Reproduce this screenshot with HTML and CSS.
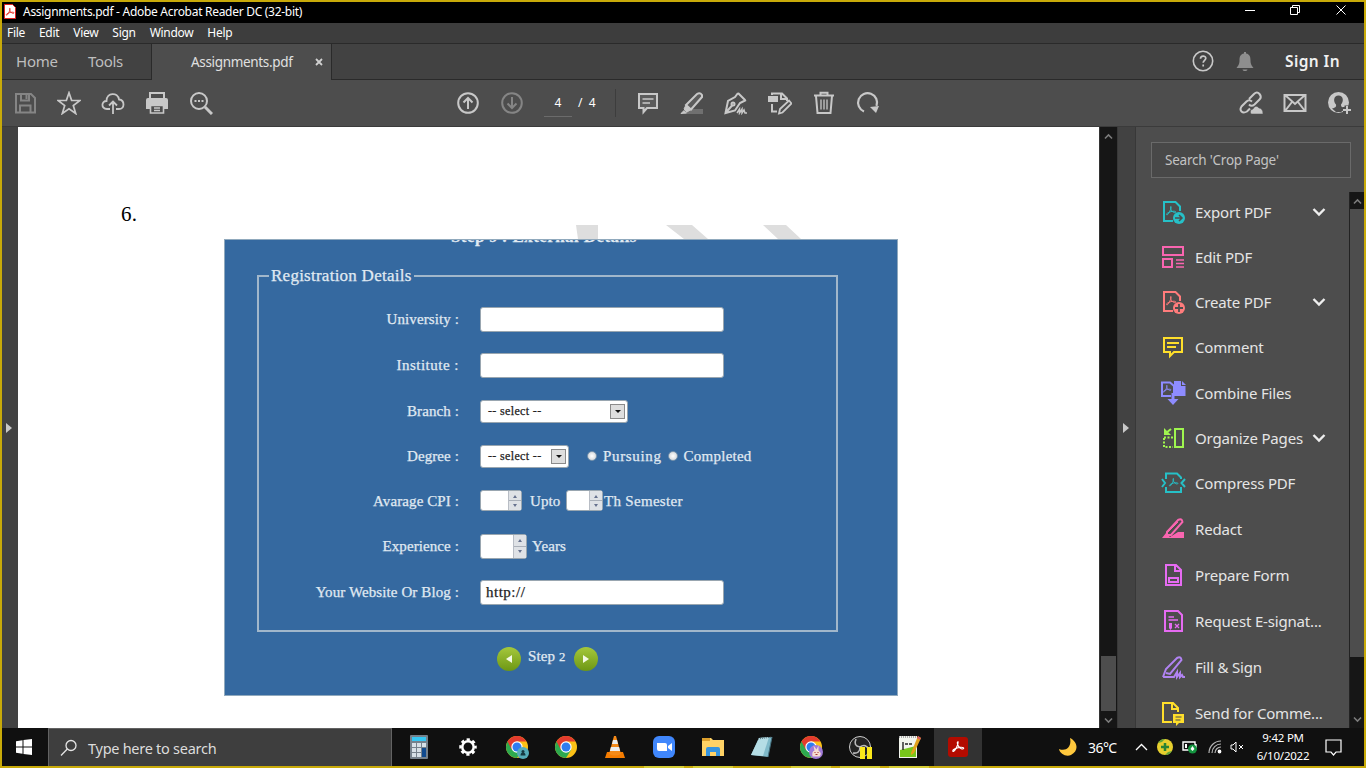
FILE: index.html
```html
<!DOCTYPE html>
<html lang="en">
<head>
<meta charset="utf-8">
<title>Assignments.pdf - Adobe Acrobat Reader DC (32-bit)</title>
<link rel="stylesheet" href="styles.css">
</head>
<body>
<svg class="defs" width="0" height="0">
  <symbol id="acro" viewBox="0 0 24 24"><path d="M12 3c-2 0-1 5 1 8s6 5 8 4 0-3-5-2.500-13 3.500-13 6 3 1 5-3 5-9 4-12z" fill="none" stroke="currentColor" stroke-width="2"/></symbol>
  <symbol id="chev" viewBox="0 0 14 10"><path d="M1.500 2 7 7.500 12.500 2" fill="none" stroke="currentColor" stroke-width="2.400"/></symbol>
  <symbol id="chrome" viewBox="0 0 24 24"><circle cx="12" cy="12" r="11" fill="#fbc116"/><path d="M12 12 2.500 6.500A11 11 0 0 0 12 23l5-8z" fill="#2da94f"/><path d="M2.500 6.500A11 11 0 0 1 21.500 6.500H12L7 15z" fill="#e33b2e"/><circle cx="12" cy="12" r="5.700" fill="#fff"/><circle cx="12" cy="12" r="4.500" fill="#2f7cf0"/></symbol>
</svg>
<div class="titlebar">
  <svg class="app-icon" viewBox="0 0 12 15"><path d="M.5.500H8.500L11.500 3.500V14.500H.5z" fill="#fff" stroke="#d22"/><use href="#acro" x="1" y="3" width="10" height="10" color="#e3241b"/></svg>
  <span class="title">Assignments.pdf - Adobe Acrobat Reader DC (32-bit)</span>
  <svg class="winctl" viewBox="0 0 104 12" width="104" height="12" fill="none" stroke="#fff"><path d="M0 6.500h10M45.500 3.500h7v7h-7zM47.500 3.500v-2h7v7h-2M91.500 1.500l9 9M100.500 1.500l-9 9"/></svg>
</div>
<div class="menubar"><span>File</span><span>Edit</span><span>View</span><span>Sign</span><span>Window</span><span>Help</span></div>
<div class="tabbar">
  <span class="home">Home</span><span class="tools">Tools</span>
  <div class="tab"><span>Assignments.pdf</span><svg width="8" height="8" viewBox="0 0 8 8"><path d="M1 1l6 6M7 1 1 7" stroke="#d0d0d0" stroke-width="1.800"/></svg></div>
  <div class="account">
    <svg width="24" height="24" viewBox="0 0 24 24"><circle cx="12" cy="12" r="9.700" fill="none" stroke="#c8c8c8" stroke-width="1.600"/><path d="M9.500 9.700c0-3.400 5.300-3.400 5.300-.4 0 2-2.600 2-2.600 4.400M12.200 15.500v2" fill="none" stroke="#c8c8c8" stroke-width="1.700"/></svg>
    <svg width="20" height="24" viewBox="0 0 20 24" fill="#8e8e8e"><path d="M9 3h2v1.500c4 .5 4.500 4 4.500 7 0 4 1.500 5.500 3 7.500h-17c1.500-2 3-3.500 3-7.500 0-3 .5-6.500 4.500-7zM7.500 20.500h5c-.5 2-4.500 2-5 0z"/></svg>
    <b>Sign In</b>
  </div>
</div>
<div class="toolbar">
  <div class="group">
    <svg viewBox="0 0 24 24" stroke="#858585"><path d="M3 3H18L22 7V21.500H3zM8 3V9.500H16V3M13.500 4V8M7 21V14.500H17.500V21"/></svg>
    <svg viewBox="0 0 24 24"><path d="M12 1.800 14.600 9.300 23 9.500 16.300 14.500 18.700 22.500 12 17.700 5.300 22.500 7.700 14.500 1 9.500 9.400 9.300z" stroke-width="1.700"/></svg>
    <svg viewBox="0 0 24 24"><path d="M9 18H6C-.5 17.500.5 10 5.500 10 5.500 1 17 1 18 8.500c6 .5 6 9.500 0 9.500H15M12 23V10.500M8 14.500l4-4 4 4" stroke-width="1.800"/></svg>
    <svg viewBox="0 0 24 24"><path d="M5 8V2H19V8" stroke-width="2"/><path d="M3 7H21Q23 7 23 9V18H19V15H5V18H1V9Q1 7 3 7z" fill="#c8c8c8" stroke="none"/><path d="M5.500 14.500H18.500V22H5.500zM9 17H15M9 19.500H15" stroke-width="1.600"/></svg>
    <svg viewBox="0 0 24 24"><circle cx="10" cy="10" r="8"/><path d="M16 16l7 7" stroke-width="3"/><path d="M5.500 10h2m1.500 0h2m1.500 0h2" stroke-width="2"/></svg>
  </div>
  <div class="group pages">
    <svg viewBox="0 0 24 24"><circle cx="12" cy="12" r="9.800"/><path d="M12 18V7M7.500 11.500 12 7l4.500 4.500"/></svg>
    <svg viewBox="0 0 24 24" stroke="#858585"><circle cx="12" cy="12" r="9.800"/><path d="M12 6v11M7.500 12.500 12 17l4.500-4.500"/></svg>
    <span class="pageno">4</span>
  </div>
  <span class="total">/&nbsp; 4</span>
  <div class="group edit">
    <svg viewBox="0 0 24 24"><path d="M3 3H21V17H11L7.500 21V17H3z" fill="#5c5c5c"/><path d="M6.500 8h11M6.500 12H14" stroke-width="1.500"/></svg>
    <svg viewBox="0 0 24 24"><path d="M7 18H23V23H4z" fill="#707070" stroke="none"/><path d="M6 14 17 3q3-2 5 1v2L11 18.500z" fill="#5c5c5c"/><path d="M6 14l5 4.500L7 21 4 18zM1 22.500l3-3 2.500 2.500z" fill="#c8c8c8" stroke-width="1"/></svg>
    <svg viewBox="0 0 24 24"><path d="M14 2 11 6 4 10 1.500 22 11 19.500 16 12 22 9M14 2l7 7M1.500 22l7-8" stroke-width="2"/><circle cx="9" cy="13" r="1.500"/><path d="M13 22l2.500-4v4l2.500-4v4l2-3 1 3h2" stroke-width="1.500"/></svg>
    <svg viewBox="0 0 24 24"><path d="M4 4V2.500H14L19 7.500V10M13 3v5h6M4 13v7.500H9" stroke-width="2"/><path d="M0 5H10V11H0z" fill="#c8c8c8" stroke="none"/><path d="M11 22.500 12 18l9-8.500 2.500 3-9 9z" stroke-width="1.800"/></svg>
    <svg viewBox="0 0 24 24"><path d="M2 4.500H22M8.500 4V1.800h7V4M4 5l1.500 17h13L20 5" stroke-width="2"/><path d="M9 8.500v10M12 8.500v10M15 8.500v10" stroke-width="1.300"/></svg>
    <svg viewBox="0 0 24 24"><path d="M8 20.500A9.500 9.500 0 1 1 20.500 15" stroke-width="2.200"/><path d="M14 16l9-1-3 7z" fill="#c8c8c8" stroke="none"/></svg>
  </div>
  <div class="group share">
    <svg viewBox="0 0 24 24" stroke-width="1.800"><path d="m10 8 5-5q3-3 5.500 0t0 5.500l-5 5q-3 2.500-5.500 0M13 10.500q-3-2.500-5.500 0l-5 5q-2 3 0 5t5.500 0l3-3"/><path d="M12 23q-2-4 2-5 2.500-5 6-1 4 .5 4 6z" fill="#c8c8c8" stroke="#4d4d4d" stroke-width=".5"/></svg>
    <svg viewBox="0 0 24 24" stroke-width="1.700"><path d="M1.500 4H22.500V20H1.500zM2 4l10 9L22 4M2 20l7-9M22 20l-7-9"/></svg>
    <svg viewBox="0 0 24 24"><circle cx="11.500" cy="11.500" r="10.500" fill="#c8c8c8" stroke="none"/><path d="M11.500 4.500c5 0 5.500 6 2.500 9 0 3 1.500 2.500 5 4L14 21H9l-4-3.500c3-1 4.500-1 4-4-3-3-2.500-9 2.500-9z" fill="#4d4d4d" stroke="none"/><path d="M20 14.500v8M16 18.500h8" stroke="#4d4d4d" stroke-width="5"/><path d="M20 15v8M16 19h8" stroke-width="2"/></svg>
  </div>
</div>
<div class="main">
  <div class="handle"><i class="tri"></i></div>
  <div class="document">
    <p class="question">6.</p>
    <svg class="watermark" width="673" height="14" viewBox="0 0 673 14" fill="#dedede"><path d="M352 0h22v14h-20zM442 0h26l16 14h-24zM539 0h23l15 14h-23z"/></svg>
    <div class="form">
      <div class="step-title">Step <small>3</small> : External Details</div>
      <fieldset>
        <legend>Registration Details</legend>
        <div class="row"><label>University :</label><span class="box wide"></span></div>
        <div class="row"><label class="loose">Institute :</label><span class="box wide"></span></div>
        <div class="row"><label>Branch :</label><span class="box select branch">-- select --<i class="drop"></i></span></div>
        <div class="row r44"><label>Degree :</label><span class="box select degree">-- select --<i class="drop"></i></span><i class="radio first"></i><span class="opt loose">Pursuing</span><i class="radio"></i><span class="opt">Completed</span></div>
        <div class="row r44"><label>Avarage CPI :</label><span class="box spin s1"><i></i></span><span class="upto">Upto</span><span class="box spin s2"><i></i></span><span class="sem">Th Semester</span></div>
        <div class="row"><label>Experience :</label><span class="box spin s3"><i></i></span><span class="years">Years</span></div>
        <div class="row"><label>Your Website Or Blog :</label><span class="box wide">http://</span></div>
      </fieldset>
      <div class="steps"><span class="round"><svg width="8" height="10"><path d="M7 1v8L1 5z" fill="#f4f9e4"/></svg></span><span class="stepno">Step <small>2</small></span><span class="round"><svg width="8" height="10"><path d="M1 1v8l6-4z" fill="#f4f9e4"/></svg></span></div>
    </div>
  </div>
  <div class="scroll doc-scroll"><svg class="up" viewBox="0 0 14 10"><use href="#chev" /></svg><div class="thumb"></div><svg viewBox="0 0 14 10"><use href="#chev"/></svg></div>
  <div class="handle right"><i class="tri"></i></div>
  <div class="panel">
    <div class="search">Search 'Crop Page'</div>
    <div class="panel-body">
      <div class="list">
        <div class="item teal"><svg viewBox="0 0 24 24"><path d="M12 21H3V2H14.500L19 6.500V11"/><use href="#acro" x="4" y="5" width="12" height="12"/><circle cx="18" cy="18" r="6" fill="currentColor" stroke="none"/><path d="M14 18h7M18 15l3 3-3 3" stroke="#4d4d4d" stroke-width="1.500"/></svg><span>Export PDF</span><svg class="chev"><use href="#chev"/></svg></div>
        <div class="item pink"><svg viewBox="0 0 24 24"><path d="M2 2H22V10H2zM2 14H11V22H2z"/><path d="M15 15h8M15 18.500h8M15 22h8" stroke-width="1.300"/></svg><span>Edit PDF</span></div>
        <div class="item coral"><svg viewBox="0 0 24 24"><path d="M12 21H3V2H14.500L19 6.500V11"/><use href="#acro" x="4" y="5" width="12" height="12"/><circle cx="18" cy="18" r="6" fill="currentColor" stroke="none"/><path d="M14 18h8M18 14v8" stroke="#4d4d4d" stroke-width="1.800"/></svg><span>Create PDF</span><svg class="chev"><use href="#chev"/></svg></div>
        <div class="item yellow"><svg viewBox="0 0 24 24"><path d="M3 3H21V17H13L9 21V17H3zM6 8H18M6 12H15"/></svg><span>Comment</span></div>
        <div class="item indigo gap"><svg viewBox="0 0 24 24"><path d="M10 15H1V1.500H9L13 5V12"/><use href="#acro" x="1" y="3" width="10" height="10"/><path d="M13 0H20V5H24.500V15H13z" fill="currentColor" stroke="none"/><path d="M21 0l4 4h-4z" fill="currentColor" stroke="none"/><path d="M12 12v8" stroke-width="3"/><path d="M6.500 18H17.500L12 24z" fill="currentColor" stroke="none"/></svg><span>Combine Files</span></div>
        <div class="item lime"><svg viewBox="0 0 24 24"><path d="M14 3H22V21H14z"/><path d="M3 11.500H12M3 12V21H12" stroke-dasharray="2 1.500"/><path d="M3 2l7 7H3z" fill="currentColor" stroke="none"/><path d="M5 7 10 3"/></svg><span>Organize Pages</span><svg class="chev"><use href="#chev"/></svg></div>
        <div class="item teal"><svg viewBox="0 0 24 24"><path d="M5 8V2.500H16L20 6.500V8M5 16v5H20V16M1 8l3 4-3 4M24 8l-3.500 4L24 16"/><use href="#acro" x="7" y="6" width="11" height="11"/></svg><span>Compress PDF</span></div>
        <div class="item pink gap"><svg viewBox="0 0 24 24"><path d="M6 15 17 3q4-2 4.500 2L10 18H6z"/><path d="M7 15 17 5" stroke-width="1"/><path d="M1 21l4-5 4 4 8-5h6v6z" fill="currentColor" stroke="none"/></svg><span>Redact</span></div>
        <div class="item magenta gap"><svg viewBox="0 0 24 24"><path d="M5 2H15L20 7V22H5zM14 3V8H20M8 15h9v4H8z"/></svg><span>Prepare Form</span></div>
        <div class="item magenta gap"><svg viewBox="0 0 24 24"><path d="M4 2H17L21 6V22H4z"/><path d="M7.500 8H13M7.500 11H17M14 15l4 4M18 15l-4 4" stroke-width="1.300"/><path d="M8 14h3v5l-1.500 2L8 19z" fill="currentColor" stroke="none"/></svg><span>Request E-signat...</span></div>
        <div class="item violet gap"><svg viewBox="0 0 24 24"><path d="M2 22 5 14 16 3q4-2 4.500 2L9 19l-4-1M2 22h11l3-5v5l3-4v4l2-2 1 2h2"/></svg><span>Fill &amp; Sign</span></div>
        <div class="item yellow gap"><svg viewBox="0 0 24 24"><path d="M11 21H2V2H12L17 7V11M11 2V8H17"/><path d="M12 13H23V22H18L15 25V22H12z" fill="currentColor" stroke="none"/><path d="M14.500 16h6M14.500 19h5" stroke="#4d4d4d" stroke-width="1.200"/></svg><span>Send for Comme...</span></div>
      </div>
      <div class="scroll panel-scroll"><svg class="up" viewBox="0 0 14 10"><use href="#chev"/></svg><div class="thumb"></div><svg viewBox="0 0 14 10"><use href="#chev"/></svg></div>
    </div>
  </div>
</div>
<div class="taskbar">
  <div class="start"><svg width="16" height="16" fill="#fff"><path d="M0 2.200 6.500 1.200V7.500H0zM7.500 1 16 0V7.500H7.500zM0 8.500H6.500V14.800L0 13.800zM7.500 8.500H16V16L7.500 15z"/></svg></div>
  <div class="tsearch"><svg width="18" height="18" viewBox="0 0 18 18" fill="none" stroke="#e4e4e4" stroke-width="1.300"><circle cx="11" cy="6.500" r="5"/><path d="M7.300 10 1 16.500"/></svg><span>Type here to search</span></div>
  <div class="apps">
    <div><svg viewBox="0 0 24 24"><rect x="3" width="18" height="24" rx="1" fill="#75818c"/><path d="M5 2H19V6H5z" fill="#35c7f4"/><path d="M5 8h4v4H5zM10 8h4v4h-4zM15 8h4v4h-4zM5 13h4v4H5zM10 13h4v4h-4zM5 18h4v4H5zM10 18h4v4h-4z" fill="#d6e0e7"/><path d="M15 13h4v9h-4z" fill="#104a8e"/></svg></div>
    <div><svg viewBox="0 0 24 24" fill="none" stroke="#fff"><circle cx="12" cy="12" r="7.500" stroke-width="2.500" stroke-dasharray="3.200 2.690" stroke-dashoffset="1.600"/><circle cx="12" cy="12" r="5.700" stroke-width="2.500"/></svg></div>
    <div><svg viewBox="0 0 24 24"><use href="#chrome"/><circle cx="18" cy="18" r="6" fill="#55acb9"/><circle cx="18" cy="16.500" r="1.500" fill="#163941"/><path d="M15.500 20.500q0-3 2.500-3t2.500 3z" fill="#163941"/></svg></div>
    <div><svg viewBox="0 0 24 24"><use href="#chrome"/></svg></div>
    <div><svg viewBox="0 0 24 24"><path d="M4 17H20L22 23H2z" fill="#f57c00"/><path d="M11 1h2l5 18q-6 3-12 0z" fill="#f58a18"/><path d="M10 5h4l1 4H9zM7.900 12h8.200l1 4H6.900z" fill="#eee"/></svg></div>
    <div><svg viewBox="0 0 24 24"><rect x="1" y="1" width="22" height="22" rx="6" fill="#4087fc"/><path d="M5 8h8q2 0 2 2v6H7q-2 0-2-2zM16 11l4-3v8l-4-3z" fill="#fff"/></svg></div>
    <div><svg viewBox="0 0 24 24"><path d="M1 3h9l2 2h11v16H1z" fill="#ffd265"/><path d="M1 3h8v3H1z" fill="#dda02d"/><path d="M5 21v-7q0-2 2-2h10q2 0 2 2v7h-4v-4H9v4z" fill="#3694de"/></svg></div>
    <div><svg viewBox="0 0 24 24"><path d="M9 3 22 2 18 22 1 20z" fill="#80bac9"/><path d="M9 3 19 2 13 21 1 20z" fill="#b5dde5"/><path d="M8 4 22 2" stroke="#546b75" stroke-dasharray="1 1"/><path d="M22 2 18 22" stroke="#447080"/></svg></div>
    <div><svg viewBox="0 0 24 24"><use href="#chrome"/><circle cx="17" cy="17" r="7" fill="#a17bd9"/><path d="M13.500 21.500q-1-5 2-6l-1-5 3 4 2-4v5q4 3 1 6z" fill="#f6ddd0"/><path d="M15.500 17.500h1m2 0h1m-3 2h2" stroke="#a33"/></svg></div>
    <div><svg viewBox="0 0 24 24"><circle cx="12" cy="12" r="10.500" fill="#242424" stroke="#ccc"/><path d="M12 12Q5 11 8 4M12 12q6-4 9 3M12 12q0 7-7 6" fill="none" stroke="#bbb" stroke-width="1.600"/><path d="M12 12h5v12h-5zM19 12h5v12h-5z" fill="#fce81a"/></svg></div>
    <div><svg viewBox="0 0 24 24"><path d="M2 1H20V23H2z" fill="#f1f4ed"/><path d="M3 15 19 11V22H3z" fill="#78c71b"/><path d="M2 2H20" stroke="#aaa" stroke-width="2" stroke-dasharray="1 1"/><path d="M6 7v8M8 9h3m1 0h3" stroke="#222" stroke-width="1.400"/><path d="M14 18 21 1l3 2-7 15-3 2z" fill="#e3a11a"/><path d="M21 1l3 2-1 2-3-2z" fill="#d85d60"/></svg></div>
    <div class="active"><svg viewBox="0 0 24 24"><rect x="2" y="2" width="20" height="20" rx="3" fill="#b30b00"/><use href="#acro" x="5" y="5" width="14" height="14" color="#fff"/></svg></div>
  </div>
  <div class="tray">
    <svg class="moon" width="20" height="20"><path d="M12 1c8 4 9 13 1 17C8 20 2 17 1 12c7 3 13-2 11-11z" fill="#ffc83d"/></svg>
    <span class="temp">36°C</span>
    <svg class="caret" width="13" height="8"><path d="M1 7l5.500-5.500L12 7" fill="none" stroke="#fff" stroke-width="1.300"/></svg>
    <svg class="plus" width="16" height="16"><circle cx="8" cy="8" r="8" fill="#e7cf2e"/><path d="M1 4A8 8 0 0 1 8 0L5 3M15 12a8 8 0 0 1-7 4l3-3" fill="#62a63a"/><path d="M8 4v8M4 8h8" stroke="#298334" stroke-width="2.500"/></svg>
    <svg class="battery" width="16" height="14"><path d="M1 2h12v8H1zM14 4v4" fill="none" stroke="#fff" stroke-width="1.400"/><path d="M3 4h2v4H3z" fill="#fff"/><circle cx="10.500" cy="9" r="4.500" fill="#13943f"/><path d="M10.500 6l2 3-2 2-2-2z" fill="#fff"/></svg>
    <svg class="wifi" width="14" height="14" fill="none" stroke="#b5b5b5" stroke-width="1.200"><path d="M1 13A12 12 0 0 1 13 1M4 13A9 9 0 0 1 13 4M7 13a6 6 0 0 1 6-6"/><circle cx="11.500" cy="11.500" r="1.300" fill="#fff" stroke="#fff"/></svg>
    <svg class="sound" width="15" height="12" fill="none" stroke="#fff"><path d="M1 4h2l3-3v10L3 8H1zM9 4l4 4M13 4 9 8"/></svg>
    <div class="clock"><span>9:42 PM</span><span>6/10/2022</span></div>
    <svg class="note" width="17" height="17" fill="none" stroke="#fff" stroke-width="1.200"><path d="M1 1H16V13H11L8.500 16 6 13H1z"/></svg>
  </div>
</div>
</body>
</html>
```
FILE: styles.css
```css
* { box-sizing: border-box; }
body { margin: 0; width: 1366px; height: 768px; padding: 2px; overflow: hidden; display: flex; flex-direction: column; font-family: "Noto Sans", sans-serif; font-size: 12px; color: #fff;
  background: linear-gradient(90deg, transparent 644px, #d6cd36 644px 684px, transparent 684px 693px, #d6cd36 693px 733px, transparent 733px 791px, #d6cd36 791px 831px, transparent 831px 840px, #d6cd36 840px 880px, transparent 880px 889px, #d6cd36 889px 929px, transparent 929px) bottom / 100% 2px no-repeat, #c8aa09; }
svg { flex: none; display: block; }
.defs { position: absolute; }
.titlebar { height: 21px; flex: none; background: #000; display: flex; align-items: center; padding-left: 2px; }
.app-icon { width: 12px; height: 15px; margin-top: -2px; }
.title { margin-left: 7px; padding-bottom: 2px; letter-spacing: -.29px; white-space: nowrap; }
.winctl { margin-left: auto; margin-right: 15px; margin-top: -5px; }
.menubar { height: 21px; flex: none; background: #3d3d3d; border-bottom: 1px solid #2a2a2a; display: flex; align-items: center; padding: 0 0 2px 5px; gap: 14px; letter-spacing: -.3px; }
.tabbar { height: 36px; flex: none; background: #424242; border-bottom: 1px solid #2a2a2a; display: flex; align-items: center; font-size: 15px; color: #bebebe; }
.home { margin-left: 14px; width: 72px; padding-bottom: 2px; letter-spacing: -.2px; }
.tools { width: 63px; padding-bottom: 2px; letter-spacing: -.3px; }
.tab { width: 181px; height: 36px; margin-bottom: -1px; background: #4d4d4d; border: solid #2a2a2a; border-width: 0 1px; display: flex; align-items: center; padding: 0 8px 0 39px; justify-content: space-between; font-size: 13.5px; letter-spacing: -.33px; color: #e0e0e0; }
.account { margin-left: auto; display: flex; align-items: center; padding: 0 24px 2px 0; }
.account b { margin-left: 30px; width: 55px; font-weight: 600; font-size: 15.500px; letter-spacing: .4px; color: #f0f0f0; white-space: nowrap; }
.account svg + svg { margin-left: 20px; }
.toolbar { height: 47px; flex: none; background: #4d4d4d; border-bottom: 1px solid #3b3b3b; display: flex; align-items: center; }
.group { display: flex; gap: 20px; align-items: center; margin-left: 11px; }
.group svg { width: 24px; height: 24px; fill: none; stroke-width: 2; }
.group svg:not([stroke]) { stroke: #c8c8c8; }
.group svg[stroke-width] { stroke: #c8c8c8; }
.group.pages { margin-left: 243px; }
.pageno { width: 28px; height: 28px; border-bottom: 1px solid #6b6b6b; text-align: center; line-height: 27px; }
.total { margin-left: 6px; width: 37px; padding-bottom: 1px; }
.group.edit { margin-left: 0; padding-left: 20px; border-left: 1px solid #3d3d3d; height: 28px; }
.group.share { margin-left: auto; margin-right: 13px; }
.main { height: 601px; flex: none; display: flex; background: #424242; }
.handle { width: 16px; flex: none; display: flex; align-items: center; padding-left: 4px; }
.handle.right { width: 19px; border: solid #383838; border-width: 0 1px; padding-left: 5px; }
.tri { border: solid transparent; border-width: 5.500px 0 5.500px 6px; border-left-color: #c8c8c8; }
.document { width: 1081px; height: 601px; background: #fff; flex: none; }
.question { margin: 0; height: 98px; padding: 74px 0 0 103px; font: 21px/26px "Liberation Serif", serif; color: #000; letter-spacing: .2px; }
.watermark { margin-left: 206px; }
.form { margin-left: 206px; width: 674px; height: 457px; background: #3569a0; border: 1px solid #90a9bd; overflow: hidden; font: 15px/20px "Liberation Serif", serif; color: #e0eaf2; letter-spacing: .1px; -webkit-text-stroke: .25px; }
.step-title { margin: -13px 0 0 226px; height: 20px; line-height: 20px; font-size: 17px; letter-spacing: .42px; white-space: nowrap; font-weight: bold; }
fieldset { margin: 19px 0 0 32px; padding: 0; width: 581px; height: 366px; border: 2px solid #a1b7cb; }
legend { margin-left: 10px; padding: 0 2px; height: 20px; font-size: 17px; letter-spacing: .25px; }
.row { height: 46px; display: flex; align-items: center; }
legend + .row { margin-top: 10px; }
.row.r44 { height: 44.500px; }
label { width: 200px; text-align: right; margin-right: 21px; }
label.loose { letter-spacing: .5px; }
.box { display: flex; align-items: center; background: #fff; border: 1px solid #99a6b0; border-radius: 3px; color: #222; }
.wide { width: 244px; height: 25px; padding-left: 5px; letter-spacing: .5px; }
.select { height: 23px; font-size: 12px; justify-content: space-between; padding: 0 2px 0 7px; letter-spacing: .35px; }
.branch { width: 148px; }
.degree { width: 89px; }
.drop { width: 15px; height: 15px; background: #dedede; border: 1px solid #8b8b8b; display: flex; align-items: center; justify-content: center; }
.drop::after { content: ""; border: 3px solid transparent; border-top-color: #111; border-bottom: 0; }
.radio { width: 10px; height: 10px; border-radius: 50%; background: radial-gradient(#fff, #c9ced2); border: 1px solid #7894ad; margin-left: 6px; }
.radio.first { margin-left: 18px; }
.opt { margin-left: 6px; letter-spacing: .25px; }
.opt.loose { letter-spacing: .65px; }
.spin { height: 21px; justify-content: flex-end; }
.s1 { width: 42px; } .s2 { width: 37px; } .s3 { width: 47px; height: 25px; }
.spin i { width: 13px; height: 100%; border-left: 1px solid #b8bdc5; background: linear-gradient(#dfe2e6 48%, #aab0b9 48% 53%, #dfe2e6 53%); display: flex; flex-direction: column; justify-content: space-around; align-items: center; }
.spin i::before, .spin i::after { content: ""; border: 2px solid transparent; }
.spin i::before { border-bottom: 3px solid #67728e; border-top: 0; }
.spin i::after { border-top: 3px solid #67728e; border-bottom: 0; }
.upto { margin: 0 5px 0 8px; width: 31px; }
.sem { margin-left: 1px; letter-spacing: .3px; white-space: nowrap; }
.years { margin-left: 5px; }
.steps { display: flex; align-items: center; margin: 15px 0 0 272px; }
.round { width: 24px; height: 24px; border-radius: 50%; background: linear-gradient(#a5c83c, #6d9714); display: flex; align-items: center; justify-content: center; }
.stepno { width: 39px; margin: -5px 7px 0 7px; white-space: nowrap; }
small { font-size: .85em; }
.scroll { background: #161616; color: #7c7c7c; display: flex; flex-direction: column; align-items: center; }
.scroll > svg { width: 9px; height: 7px; }
.scroll .up { transform: rotate(180deg); }
.scroll .thumb { background: #4d4d4d; }
.doc-scroll { width: 18px; border-left: 1px solid #333; padding: 6px 0 4px; }
.doc-scroll .thumb { width: 15px; height: 55px; margin: auto 0 6px; }
.panel { flex: 1; background: #4d4d4d; display: flex; flex-direction: column; min-width: 0; }
.search { margin: 15px 13px 14px 15px; height: 36px; flex: none; border: 1px solid #6a6a6a; background: #484848; color: #c3c3c3; font-size: 13.5px; line-height: 34px; padding-left: 13px; letter-spacing: -.22px; }
.panel-body { display: flex; height: 536px; overflow: hidden; }
.list { width: 213px; height: 539px; overflow: hidden; margin-top: -3px; }
.item { height: 45px; display: flex; align-items: center; padding-left: 25px; font-size: 15px; letter-spacing: -.17px; }
.item.gap { margin-top: 1px; }
.item > svg { width: 24px; height: 24px; fill: none; stroke: currentColor; stroke-width: 2; overflow: visible; }
.item span { margin-left: 10px; color: #e5e5e5; white-space: nowrap; }
.item .chev { width: 14px; height: 10px; margin-left: auto; margin-right: 23px; color: #eee; stroke: none; }
.teal { color: #26c0c7; } .pink { color: #f965b0; } .coral { color: #ff7c7c; } .yellow { color: #ffdf2b; }
.indigo { color: #8e8cff; } .lime { color: #9ff54f; } .magenta { color: #e66bf2; } .violet { color: #b183f2; }
.panel-scroll { width: 15px; border-left: 1px solid #222; padding-top: 6px; }
.panel-scroll .thumb { width: 14px; height: 448px; margin: 4px 0 59px; }
.taskbar { height: 38px; flex: none; background: #101010; display: flex; }
.start { width: 46px; display: flex; align-items: center; padding-left: 14px; }
.tsearch { width: 344px; background: #3e3e3e; border: solid #626262; border-width: 1px 1px 0; display: flex; align-items: center; padding-left: 11px; font-size: 14.5px; letter-spacing: -.27px; color: #dcdcdc; }
.tsearch span { margin-left: 10px; }
.apps { display: flex; gap: 1px; margin-left: 3px; }
.apps div { width: 48px; display: flex; align-items: center; justify-content: center; }
.apps svg { width: 24px; height: 24px; }
.apps .active { background: #323232; }
.tray { display: flex; align-items: center; margin-left: 76px; }
.temp { margin-left: 10px; width: 30px; font-size: 14px; letter-spacing: -.55px; white-space: nowrap; }
.caret { margin-left: 17px; } .plus { margin-left: 9px; } .battery { margin-left: 9px; } .wifi { margin-left: 10px; } .sound { margin-left: 8px; }
.clock { width: 60px; margin-left: 8px; display: flex; flex-direction: column; text-align: center; font-size: 11.500px; line-height: 18px; letter-spacing: -.22px; }
.note { margin-left: 12px; }
```
